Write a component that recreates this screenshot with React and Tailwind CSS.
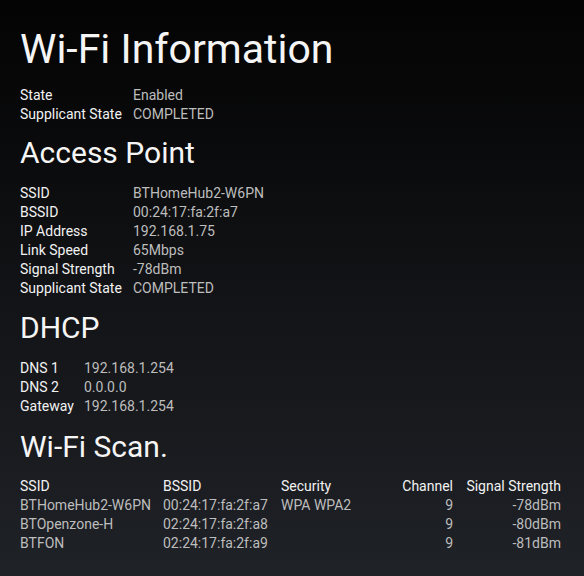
import React from 'react';

const info = [
  ['State', 'Enabled'],
  ['Supplicant State', 'COMPLETED'],
];

const accessPoint = [
  ['SSID', 'BTHomeHub2-W6PN'],
  ['BSSID', '00:24:17:fa:2f:a7'],
  ['IP Address', '192.168.1.75'],
  ['Link Speed', '65Mbps'],
  ['Signal Strength', '-78dBm'],
  ['Supplicant State', 'COMPLETED'],
];

const dhcp = [
  ['DNS 1', '192.168.1.254'],
  ['DNS 2', '0.0.0.0'],
  ['Gateway', '192.168.1.254'],
];

const scan = [
  { ssid: 'BTHomeHub2-W6PN', bssid: '00:24:17:fa:2f:a7', security: 'WPA WPA2', channel: 9, signal: '-78dBm' },
  { ssid: 'BTOpenzone-H', bssid: '02:24:17:fa:2f:a8', security: '', channel: 9, signal: '-80dBm' },
  { ssid: 'BTFON', bssid: '02:24:17:fa:2f:a9', security: '', channel: 9, signal: '-81dBm' },
];

function Rows({ rows, labelWidth }) {
  return (
    <div className="flex flex-col">
      {rows.map(([label, value]) => (
        <div key={label} className="flex h-[19px] items-center text-[14px] leading-[19px]">
          <span className={`${labelWidth} text-[#f2f2f2]`}>{label}</span>
          <span className="text-[#bdbdbd]">{value}</span>
        </div>
      ))}
    </div>
  );
}

export default function App() {
  return (
    <div
      className="min-h-screen h-[576px] w-full bg-linear-to-b from-[#040404] via-[#121316] to-[#1f2227] px-5 pt-[29px] text-white"
      style={{ fontFamily: 'Roboto, "Noto Sans", sans-serif' }}
    >
      <h1 className="text-[41px] leading-none font-normal text-[#f5f5f5]">Wi-Fi Information</h1>
      <div className="mt-[16px]">
        <Rows rows={info} labelWidth="w-[113px]" />
      </div>

      <h2 className="mt-[14px] text-[30px] leading-none text-[#f5f5f5]">Access Point</h2>
      <div className="mt-[16px]">
        <Rows rows={accessPoint} labelWidth="w-[113px]" />
      </div>

      <h2 className="mt-[15px] text-[30px] leading-none text-[#f5f5f5]">DHCP</h2>
      <div className="mt-[16px]">
        <Rows rows={dhcp} labelWidth="w-[64px]" />
      </div>

      <h2 className="mt-[16px] text-[30px] leading-none text-[#f5f5f5]">Wi-Fi Scan.</h2>
      <div className="mt-[15px] text-[14px] leading-[19px]">
        <div className="flex text-[#f2f2f2]">
          <span className="w-[143px]">SSID</span>
          <span className="w-[118px]">BSSID</span>
          <span className="w-[100px]">Security</span>
          <span className="w-[72px] text-right">Channel</span>
          <span className="w-[108px] text-right">Signal Strength</span>
        </div>
        {scan.map(net => (
          <div key={net.bssid} className="flex text-[#bdbdbd]">
            <span className="w-[143px]">{net.ssid}</span>
            <span className="w-[118px]">{net.bssid}</span>
            <span className="w-[100px]">{net.security}</span>
            <span className="w-[72px] text-right">{net.channel}</span>
            <span className="w-[108px] text-right">{net.signal}</span>
          </div>
        ))}
      </div>
    </div>
  );
}
